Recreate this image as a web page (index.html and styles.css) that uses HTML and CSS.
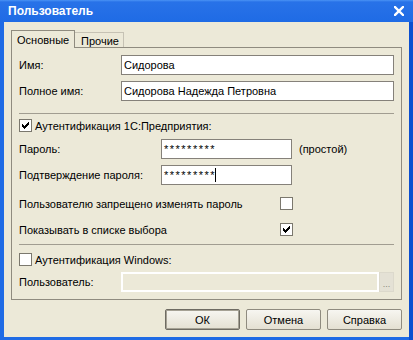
FILE: index.html
```html
<!DOCTYPE html>
<html lang="ru">
<head>
    <meta charset="UTF-8">
    <title>Пользователь</title>
    <link rel="stylesheet" href="styles.css">
</head>
<body>
    <div class="window">
        <div class="titlebar">
            <span class="title">Пользователь</span>
            <svg class="close" width="10" height="10" viewBox="0 0 10 10">
                <path d="M1 1 L9 9 M9 1 L1 9" stroke="#fff" stroke-width="2.4" stroke-linecap="square"/>
            </svg>
        </div>

        <div class="client">
            <div class="tabs">
                <div class="tab active">Основные</div>
                <div class="tab">Прочие</div>
            </div>

            <div class="panel">
                <div class="row r-name">
                    <span class="lbl">Имя:</span>
                    <div class="field">Сидорова</div>
                </div>
                <div class="row r-full">
                    <span class="lbl">Полное имя:</span>
                    <div class="field">Сидорова Надежда Петровна</div>
                </div>

                <div class="sep s-top"></div>

                <div class="check-row c-1c">
                    <span class="cb">
                        <svg width="11" height="11" viewBox="0 0 11 11"><path d="M8 2h1v1h-1z M7 3h2v1h-2z M2 4h1v1h-1z M6 4h3v1h-3z M2 5h2v1h-2z M5 5h3v1h-3z M2 6h5v1h-5z M3 7h3v1h-3z M4 8h1v1h-1z" fill="#000"/></svg>
                    </span>
                    <span>Аутентификация 1С:Предприятия:</span>
                </div>

                <div class="row r-pass">
                    <span class="lbl wide">Пароль:</span>
                    <div class="field pass">*********</div>
                    <span class="note">(простой)</span>
                </div>
                <div class="row r-confirm">
                    <span class="lbl wide">Подтверждение пароля:</span>
                    <div class="field pass">*********<span class="caret"></span></div>
                </div>

                <div class="opt-row o-deny">
                    <span>Пользователю запрещено изменять пароль</span>
                    <span class="cb"></span>
                </div>
                <div class="opt-row o-show">
                    <span>Показывать в списке выбора</span>
                    <span class="cb">
                        <svg width="11" height="11" viewBox="0 0 11 11"><path d="M8 2h1v1h-1z M7 3h2v1h-2z M2 4h1v1h-1z M6 4h3v1h-3z M2 5h2v1h-2z M5 5h3v1h-3z M2 6h5v1h-5z M3 7h3v1h-3z M4 8h1v1h-1z" fill="#000"/></svg>
                    </span>
                </div>

                <div class="sep s-bottom"></div>

                <div class="check-row c-win">
                    <span class="cb"></span>
                    <span>Аутентификация Windows:</span>
                </div>

                <div class="row r-user">
                    <span class="lbl">Пользователь:</span>
                    <div class="field disabled"></div>
                    <div class="pick">...</div>
                </div>
            </div>

            <div class="buttons">
                <button class="btn default">ОК</button>
                <button class="btn">Отмена</button>
                <button class="btn">Справка</button>
            </div>
        </div>
    </div>
</body>
</html>
```

FILE: styles.css
```css
* {
    margin: 0;
    padding: 0;
    box-sizing: border-box;
}

body {
    font-family: "Liberation Sans", Tahoma, Arial, sans-serif;
    font-size: 11px;
    color: #000;
    background: #fff;
}

.window {
    width: 413px;
    height: 340px;
    background: linear-gradient(to right, #1f6be5 409px, #0b4fd0 409px);
    display: flex;
    flex-direction: column;
}

.titlebar {
    height: 22px;
    display: flex;
    align-items: center;
    justify-content: space-between;
    padding: 0 9px 0 8px;
    background: linear-gradient(#4a93f5 0, #2872e8 2px, #1f6be5 100%);
    color: #fff;
}

.title {
    font-size: 12px;
    font-weight: bold;
}

.client {
    flex: 1;
    margin: 0 4px 3px 4px;
    background: #ece9d8;
    padding: 8px 7px 0 7px;
}

/* tabs */

.tabs {
    display: flex;
    align-items: flex-end;
    height: 17px;
}

.tab {
    height: 15px;
    width: 49px;
    padding: 2px 0 0 6px;
    line-height: 12px;
    border: 1px solid #c6c2b4;
    border-left: none;
    border-bottom: none;
}

.tab.active {
    width: 64px;
    height: 18px;
    margin-bottom: -1px;
    padding: 3px 0 0 5px;
    border: 1px solid #8f8b7f;
    border-bottom: none;
    background: #ece9d8;
    position: relative;
    z-index: 1;
}

.panel {
    height: 253px;
    border: 1px solid #8f8b7f;
    padding: 7px;
}

/* rows */

.row {
    display: flex;
    align-items: center;
    height: 20px;
}

.lbl {
    width: 102px;
    flex-shrink: 0;
}

.lbl.wide {
    width: 142px;
}

.field {
    flex: 1;
    height: 20px;
    border: 1px solid #85817a;
    background: #fff;
    padding: 0 2px;
    line-height: 18px;
    white-space: nowrap;
}

.field.pass {
    flex: none;
    width: 131px;
    letter-spacing: 1.5px;
}

.caret {
    display: inline-block;
    width: 1px;
    height: 14px;
    background: #000;
    vertical-align: -3px;
    margin-left: -1px;
}

.field.disabled {
    flex: none;
    width: 258px;
    background: #ece9d8;
    border: 2px solid #fff;
}

.pick {
    width: 15px;
    height: 20px;
    background: #e4e1d5;
    border: 1px solid #dcd9cc;
    color: #8a877c;
    font-size: 9px;
    text-align: center;
    line-height: 22px;
}

.note {
    margin-left: 7px;
}

.r-full { margin-top: 6px; }
.r-pass { margin-top: 7px; }
.r-confirm { margin-top: 6px; }
.r-user { margin-top: 6px; }

.sep {
    height: 1px;
    background: #a19d91;
}

.s-top { margin-top: 12px; }
.s-bottom { margin-top: 8px; }

/* checkboxes */

.cb {
    width: 13px;
    height: 13px;
    border: 1px solid #7b786e;
    background: #fff;
    display: flex;
}

.check-row {
    display: flex;
    align-items: center;
    gap: 3px;
    height: 13px;
}

.c-1c { margin-top: 5px; }
.c-win { margin-top: 8px; }

.opt-row {
    display: grid;
    grid-template-columns: 261px 13px;
    align-items: center;
    height: 13px;
}

.o-deny { margin-top: 12px; }
.o-show { margin-top: 13px; }

/* buttons */

.buttons {
    display: flex;
    justify-content: flex-end;
    gap: 6px;
    margin-top: 9px;
}

.btn {
    width: 75px;
    height: 21px;
    font-family: inherit;
    font-size: 11px;
    font-weight: normal;
    color: #000;
    border: 1px solid #8f8b7f;
    border-radius: 2px;
    background: linear-gradient(#f7f6f1, #e4e0d2);
}

.btn.default {
    border-color: #6e6b62;
    box-shadow: inset 0 0 0 1px #a5a194;
}
```
